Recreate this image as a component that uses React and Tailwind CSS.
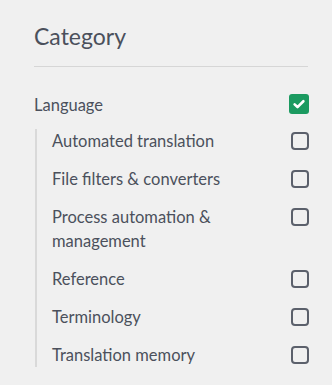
import React from "react";

const subCategories = [
    { label: "Automated translation" },
    { label: "File filters & converters" },
    { label: "Process automation & management" },
    { label: "Reference" },
    { label: "Terminology" },
    { label: "Translation memory" },
];

const CheckedBox = () => (
    <span className="mt-px flex h-[20px] w-[20px] shrink-0 items-center justify-center rounded-[3px] bg-[#1b9a60]">
        <svg viewBox="0 0 16 16" className="h-[14px] w-[14px]" fill="none">
            <path d="M3 8.4 L6.3 11.5 L13 4.8" stroke="#ffffff" strokeWidth="3" strokeLinecap="round" strokeLinejoin="round" />
        </svg>
    </span>
);

const EmptyBox = () => (
    <span className="mt-[3px] h-[18px] w-[18px] shrink-0 rounded-[4px] border-2 border-[#5b606b]" />
);

const App = () => {
    return (
        <div className="min-h-[385px] w-[332px] bg-[#f0f0f0] pl-[34px] pr-[23px] pt-[22px] font-['Lato',sans-serif] text-[#4b505c]">
            {/* Heading */}
            <div className="border-b border-[#d6d6d6] pb-4 mr-px">
                <h2 className="text-[23px] leading-[28px] font-normal">Category</h2>
            </div>

            {/* Parent category */}
            <div className="mt-[26px] flex items-start justify-between gap-4">
                <span className="text-[16.5px] leading-[24px]">Language</span>
                <CheckedBox />
            </div>

            {/* Sub categories */}
            <ul className="mt-[12px] ml-px flex flex-col gap-[14px] border-l-2 border-[#d9d9d9] pl-[15px]">
                {subCategories.map((item) => (
                    <li key={item.label} className="flex items-start justify-between gap-4">
                        <span className="flex-1 text-[16.5px] leading-[24px]">{item.label}</span>
                        <EmptyBox />
                    </li>
                ))}
            </ul>
        </div>
    );
};

export default App;
